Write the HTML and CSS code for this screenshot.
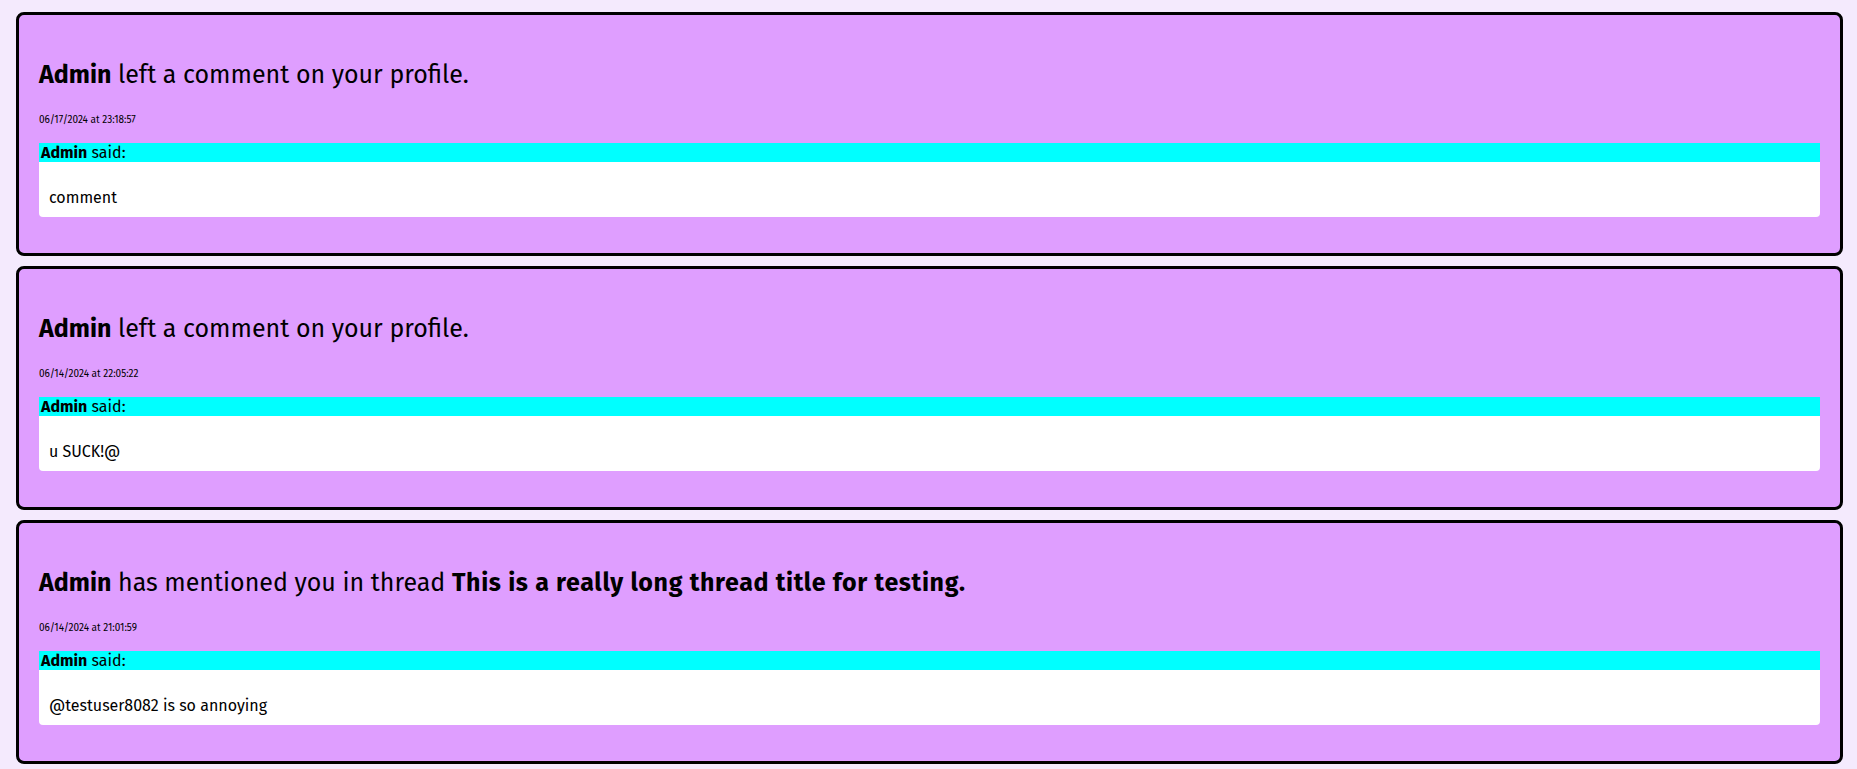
FILE: index.html
```html
<!DOCTYPE html>
<html lang="en">
<head>
<meta charset="utf-8">
<title>Notifications</title>
<link rel="stylesheet" href="styles.css">
</head>
<body>
<div class="list">
  <div class="card">
    <h2 class="title"><b>Admin</b> left a comment on your profile.</h2>
    <p class="date">06/17/2024 at 23:18:57</p>
    <div class="quote">
      <div class="quote-head"><b>Admin</b> said:</div>
      <div class="quote-body"><p>comment</p></div>
    </div>
  </div>
  <div class="card">
    <h2 class="title"><b>Admin</b> left a comment on your profile.</h2>
    <p class="date">06/14/2024 at 22:05:22</p>
    <div class="quote">
      <div class="quote-head"><b>Admin</b> said:</div>
      <div class="quote-body"><p>u SUCK!@</p></div>
    </div>
  </div>
  <div class="card">
    <h2 class="title"><b>Admin</b> has mentioned you in thread <b class="thread">This is a really long thread title for testing.</b></h2>
    <p class="date">06/14/2024 at 21:01:59</p>
    <div class="quote">
      <div class="quote-head"><b>Admin</b> said:</div>
      <div class="quote-body"><p>@testuser8082 is so annoying</p></div>
    </div>
  </div>
</div>
</body>
</html>
```

FILE: styles.css
```css
html, body {
  margin: 0;
  padding: 0;
  background: #f4eafd;
}
body {
  font-family: "Fira Sans", "Open Sans", "Noto Sans", sans-serif;
  color: #000;
}
.list {
  display: flex;
  flex-direction: column;
  gap: 10px;
  padding: 12px 14px 0 16px;
}
.card {
  background: #df9eff;
  border: 3px solid #000;
  border-radius: 8px;
  padding: 20px;
}
.title {
  margin: 24px 0 0;
  font-size: 25px;
  line-height: 32px;
  font-weight: normal;
}
.title b {
  font-weight: 700;
}
.title .thread {
  letter-spacing: 0.65px;
}
.date {
  margin: 23px 0 0;
  font-size: 10px;
  line-height: 12px;
}
.quote {
  margin: 17px 0 16px;
  border-radius: 0 0 4px 4px;
  overflow: hidden;
}
.quote-head {
  background: #00ffff;
  font-size: 16px;
  line-height: 19px;
  padding: 0 2px;
}
.quote-body {
  background: #fff;
  padding: 10px;
}
.quote-body p {
  margin: 16px 0 0;
  font-size: 16px;
  line-height: 19px;
}
```
